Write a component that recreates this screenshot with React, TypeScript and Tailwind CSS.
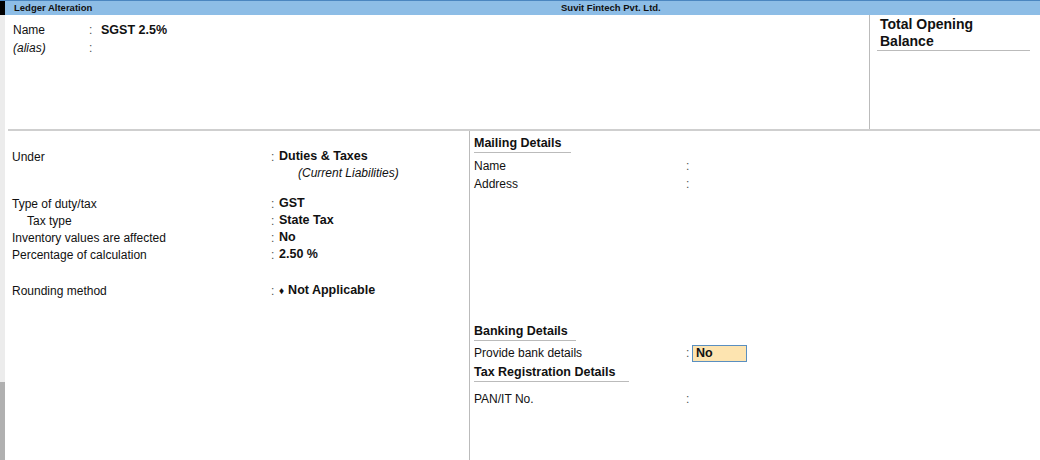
import React from "react";

const Row = ({ label, value, indent, bold = true }: { label: string; value?: React.ReactNode; indent?: boolean; bold?: boolean }) => (
  <div className="flex h-[17px] items-center">
    <div className={`w-[259px] ${indent ? "pl-[15px]" : ""}`}>{label}</div>
    <div className="w-[8px] text-[#555]">:</div>
    <div className={bold ? "font-bold text-[12.5px]" : ""}>{value}</div>
  </div>
);

const RRow = ({ label, children }: { label: string; children?: React.ReactNode }) => (
  <div className="flex h-[18px] items-center">
    <div className="w-[212px]">{label}</div>
    <div className="w-[6px] text-[#555]">:</div>
    {children}
  </div>
);

const Head = ({ children, w }: { children: React.ReactNode; w: string }) => (
  <div className={`font-bold text-[12.5px] leading-[17px] border-b border-[#bbb] ${w}`}>{children}</div>
);

export default function App() {
  return (
    <div className="w-[1040px] h-[460px] bg-white flex flex-col text-[12px] text-[#111] overflow-hidden" style={{ fontFamily: "Arial, 'Liberation Sans', sans-serif" }}>
      <div className="h-[15px] flex bg-[#8dbde6] border-t border-[#4b86c0] text-[9.5px] font-bold leading-[13px]">
        <div className="w-[5px] bg-black" />
        <div className="w-[556px] pl-[9px]">Ledger Alteration</div>
        <div>Suvit Fintech Pvt. Ltd.</div>
      </div>
      <div className="flex flex-1">
        <div className="w-[5px] flex flex-col bg-[#ececec]">
          <div className="flex-1" />
          <div className="h-[78px] bg-[#b0b0b0]" />
        </div>
        <div className="flex-1 flex flex-col pl-[3px]">
          <div className="h-[116px] flex border-b-2 border-[#cfcfcf]">
            <div className="flex-1 pl-[5px] pt-[6px] border-r border-[#bbb]">
              <div className="flex h-[18px] items-center">
                <div className="w-[76px]">Name</div>
                <div className="w-[12px] text-[#555]">:</div>
                <div className="font-bold text-[12.5px]">SGST 2.5%</div>
              </div>
              <div className="flex h-[17px] items-center italic">
                <div className="w-[76px]">(alias)</div>
                <div className="text-[#555] not-italic">:</div>
              </div>
            </div>
            <div className="w-[170px] pl-[7px] pt-[1px]">
              <div className="font-bold text-[14px] leading-[17px] border-b border-[#bbb] w-[153px] pl-[3px]">Total Opening Balance</div>
            </div>
          </div>
          <div className="flex flex-1">
            <div className="w-[462px] pl-[4px] pt-[17px] border-r border-[#bbb]">
              <Row label="Under" value="Duties & Taxes" />
              <div className="pl-[286px] italic h-[17px] leading-[17px]">(Current Liabilities)</div>
              <div className="h-[13px]" />
              <Row label="Type of duty/tax" value="GST" />
              <Row label="Tax type" value="State Tax" indent />
              <Row label="Inventory values are affected" value="No" />
              <Row label="Percentage of calculation" value="2.50 %" />
              <div className="h-[19px]" />
              <Row label="Rounding method" value={<span><span className="text-[10px] mr-[4px]">♦</span>Not Applicable</span>} />
            </div>
            <div className="flex-1 pl-[4px] pt-[4px]">
              <Head w="w-[97px]">Mailing Details</Head>
              <div className="h-[4px]" />
              <RRow label="Name" />
              <RRow label="Address" />
              <div className="h-[130px]" />
              <Head w="w-[102px]">Banking Details</Head>
              <div className="h-[3px]" />
              <RRow label="Provide bank details">
                <div className="w-[55px] h-[17px] bg-[#fde4b0] border border-[#5a8fc0] font-bold text-[12.5px] pl-[3px] leading-[15px]">No</div>
              </RRow>
              <div className="h-[2px]" />
              <Head w="w-[155px]">Tax Registration Details</Head>
              <div className="h-[8px]" />
              <RRow label="PAN/IT No." />
            </div>
          </div>
        </div>
      </div>
    </div>
  );
}
